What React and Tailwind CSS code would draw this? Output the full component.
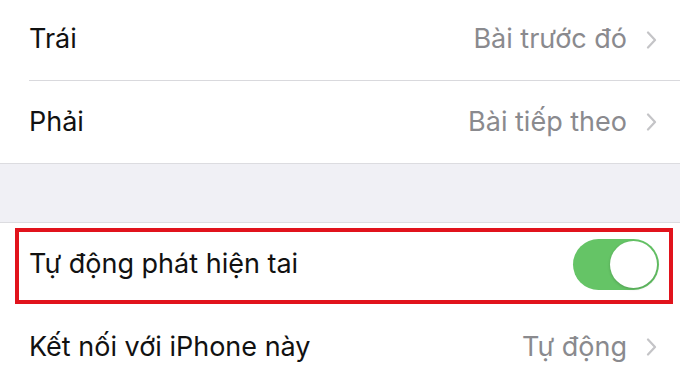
import React from "react";

function Chevron() {
  return (
    <svg width="11" height="18" viewBox="0 0 11 18" className="ml-[19px]" fill="none">
      <path d="M2 1.5 L9 9 L2 16.5" stroke="#c4c4c7" strokeWidth="2.2" strokeLinecap="round" strokeLinejoin="round" />
    </svg>
  );
}

function Row({ label, value, border }) {
  return (
    <div className="flex h-[82px] items-center pl-[29px]">
      <div className={`flex h-full flex-1 items-center pr-[23px] ${border ? "border-b border-[#d9d9dd]" : ""}`}>
        <span className="flex-1 text-[27px] text-[#111]">{label}</span>
        <span className="text-[27px] text-[#8a8a8e]">{value}</span>
        <Chevron />
      </div>
    </div>
  );
}

export default function App() {
  return (
    <div className="h-[382px] w-[680px] overflow-hidden bg-white" style={{ fontFamily: "Inter, 'Noto Sans', sans-serif" }}>
      <div className="-mt-[1px]">
        <Row label="Trái" value="Bài trước đó" border />
        <Row label="Phải" value="Bài tiếp theo" />
      </div>
      <div className="h-[60px] border-y border-[#dcdce0] bg-[#f0f0f5]" />
      <div className="relative flex h-[83px] items-center pl-[29px] pr-[21px]">
        <span className="flex-1 text-[27px] text-[#111]">Tự động phát hiện tai</span>
        <div className="flex h-[51px] w-[86px] items-center justify-end rounded-full bg-[#65c466] p-[2px]">
          <div className="h-[47px] w-[47px] rounded-full bg-white shadow-[0_1px_3px_rgba(0,0,0,0.2)]" />
        </div>
        <div className="pointer-events-none absolute left-[15px] right-[7px] top-[5px] bottom-[2px] border-[4px] border-[#e1131c]" />
      </div>
      <Row label="Kết nối với iPhone này" value="Tự động" />
    </div>
  );
}
